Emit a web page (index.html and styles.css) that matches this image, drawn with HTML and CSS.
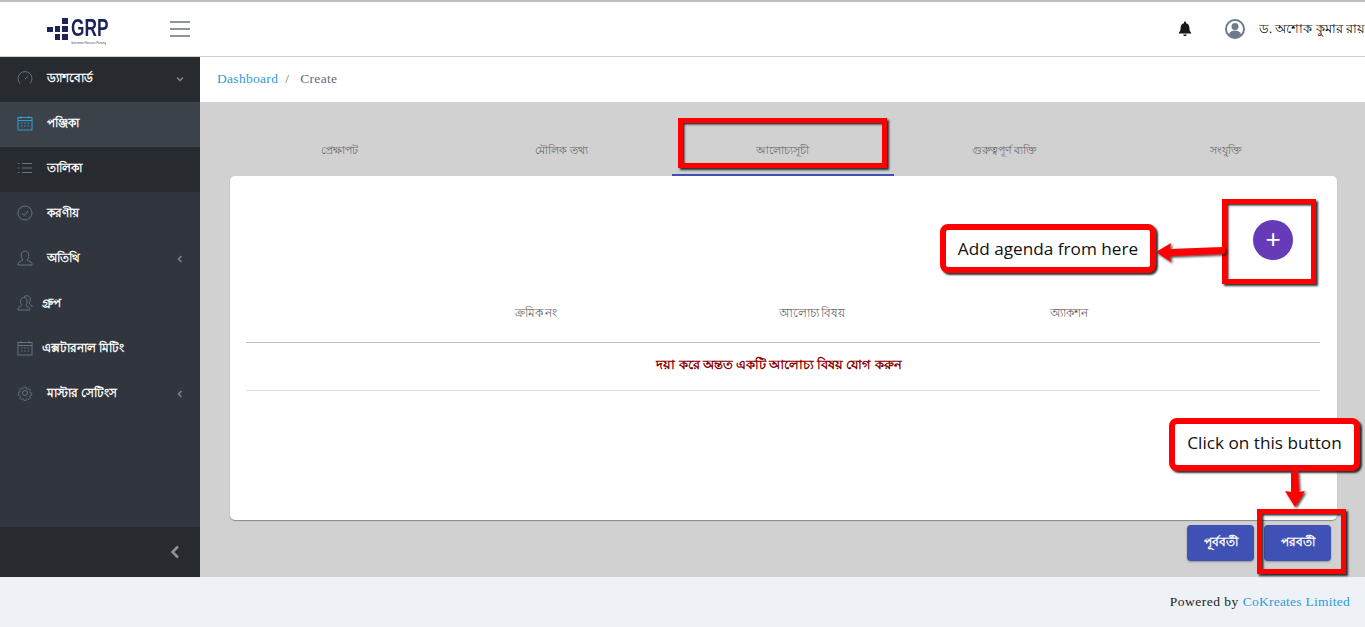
FILE: index.html
```html
<!DOCTYPE html>
<html lang="bn">
<head>
<meta charset="utf-8">
<title>GRP</title>
<link rel="stylesheet" href="styles.css">
</head>
<body>
<div class="page">
  <header class="topbar">
    <div class="brand">
      <svg class="logo-mark" width="24" height="24" viewBox="0 0 24 24"><g fill="#1d2359"><rect x="0" y="9" width="6" height="5"/><rect x="8" y="8" width="5" height="6"/><rect x="15" y="0" width="6" height="6"/><rect x="15" y="8" width="6" height="6"/><rect x="8" y="16" width="5" height="6"/><rect x="15" y="16" width="6" height="6"/></g></svg>
      <div class="logo-text"><span class="logo-word">GRP</span><span class="logo-sub">Government Resource Planning</span></div>
    </div>
    <button class="burger" aria-label="menu"><i></i><i></i><i></i></button>
    <div class="top-right">
      <svg class="bell" width="16" height="16" viewBox="0 0 16 16"><path fill="#15181c" d="M8 0.6c.6 0 1 .4 1 1v.6c2.200.5 3.400 2.300 3.400 4.500 0 3 .8 3.900 1.800 5.100v.8H1.800v-.8c1-1.200 1.800-2.100 1.800-5.100C3.600 4.500 4.800 2.700 7 2.200v-.6c0-.6.400-1 1-1zM6.200 13.600h3.600A1.800 1.800 0 0 1 8 15.300a1.800 1.800 0 0 1-1.800-1.700z"/></svg>
      <svg class="avatar" width="20" height="20" viewBox="0 0 20 20"><circle cx="10" cy="10" r="9" fill="#fff" stroke="#6e7a8a" stroke-width="2"/><circle cx="10" cy="7.500" r="3.500" fill="#6e7a8a"/><path d="M3.800 15.500c1-3 3.400-4 6.200-4s5.200 1 6.200 4A8 8 0 0 1 3.800 15.500z" fill="#6e7a8a"/></svg>
      <span class="user-name">ড. অশোক কুমার রায়</span>
    </div>
  </header>

  <div class="middle">
    <aside class="sidebar">
      <nav class="menu">
        <a class="item item-dark">
          <svg class="ico" viewBox="0 0 16 16"><path d="M3 13.500A7 7 0 1 1 13 13.500M8 9l3-2.500" /></svg>
          <span class="label">ড্যাশবোর্ড</span>
          <svg class="chev chev-down" viewBox="0 0 10 10"><path d="M2 3.500l3 3 3-3"/></svg>
        </a>
        <a class="item item-active">
          <svg class="ico ico-blue" viewBox="0 0 16 16"><rect x="1" y="2.500" width="14" height="12.500"/><path d="M4 1v2.500M12 1v2.500M1 5.500h14M4 8h1.500M7.300 8h1.500M10.600 8h1.500M4 11h1.500M7.300 11h1.500M10.600 11h1.500"/></svg>
          <span class="label">পঞ্জিকা</span>
        </a>
        <a class="item item-dark">
          <svg class="ico" viewBox="0 0 16 16"><path d="M1 3.500h1.500M5 3.500h10M1 8h1.500M5 8h10M1 12.500h1.500M5 12.500h10"/></svg>
          <span class="label">তালিকা</span>
        </a>
        <a class="item">
          <svg class="ico" viewBox="0 0 16 16"><circle cx="8" cy="8" r="7"/><path d="M5 8.300l2.200 2.200L11 6"/></svg>
          <span class="label">করণীয়</span>
        </a>
        <a class="item">
          <svg class="ico" viewBox="0 0 16 16"><path d="M1 15v-1.500c0-1.500 4-2.500 4.800-3.500C4.500 8.500 4.200 7 4.200 5 4.200 2.500 6 1 8 1s3.800 1.500 3.800 4c0 2-.3 3.500-1.600 5 .8 1 4.800 2 4.800 3.500V15z"/></svg>
          <span class="label">অতিথি</span>
          <svg class="chev" viewBox="0 0 10 10"><path d="M6.500 2l-3 3 3 3"/></svg>
        </a>
        <a class="item">
          <svg class="ico" viewBox="0 0 16 16"><path d="M1 15v-1.500c0-1.300 3-2 3.800-3C3.800 9.300 3.500 8 3.500 6.200 3.500 3.800 5 2.500 6.800 2.500s3.300 1.300 3.300 3.700c0 1.800-.3 3.100-1.300 4.300.8 1 3.800 1.700 3.800 3V15zM7 1.500C8 .8 9 .8 10 .8c2 0 3.300 1.400 3.300 3.500 0 1.700-.4 2.900-1.300 4 .7.800 3 1.500 3 2.700v1"/></svg>
          <span class="label label-tight">গ্রুপ</span>
        </a>
        <a class="item">
          <svg class="ico" viewBox="0 0 16 16"><rect x="1" y="2.500" width="14" height="12.500"/><path d="M4 1v2.500M12 1v2.500M1 5.500h14M4 8h1.500M7.300 8h1.500M10.600 8h1.500M4 11h1.500M7.300 11h1.500M10.600 11h1.500"/></svg>
          <span class="label label-tight">এক্সটারনাল মিটিং</span>
        </a>
        <a class="item">
          <svg class="ico" viewBox="0 0 16 16"><circle cx="8" cy="8" r="2.500"/><path d="M6.700 1h2.600l.4 2 1.200.6 1.800-1 1.800 1.900-1 1.800.5 1.200 2 .5v2.500l-2 .4-.5 1.200 1 1.800-1.800 1.800-1.800-1-1.200.5-.4 1.800H6.700l-.4-1.800-1.200-.5-1.800 1-1.800-1.800 1-1.800-.5-1.200-2-.4V7.300l2-.5.5-1.200-1-1.800 1.800-1.900 1.800 1 1.200-.6z" transform="translate(1.300 1.300) scale(.84)"/></svg>
          <span class="label">মাস্টার সেটিংস</span>
          <svg class="chev" viewBox="0 0 10 10"><path d="M6.500 2l-3 3 3 3"/></svg>
        </a>
      </nav>
      <div class="collapse-bar">
        <svg class="collapse" width="12" height="14" viewBox="0 0 12 14"><path d="M9 1.500L3.500 7 9 12.500"/></svg>
      </div>
    </aside>

    <main class="content">
      <div class="crumbs">
        <a class="crumb-link">Dashboard</a><span class="crumb-sep">/</span><span class="crumb-cur">Create</span>
      </div>
      <div class="work">
        <div class="tabs">
          <div class="tab">প্রেক্ষাপট</div>
          <div class="tab">মৌলিক তথ্য</div>
          <div class="tab tab-on">আলোচ্যসূচী</div>
          <div class="tab">গুরুত্বপূর্ণ ব্যক্তি</div>
          <div class="tab">সংযুক্তি</div>
        </div>
        <section class="card">
          <div class="add-row"><button class="add-btn" aria-label="add">+</button></div>
          <div class="thead"><span>ক্রমিক নং</span><span>আলোচ্য বিষয়</span><span>অ্যাকশন</span></div>
          <div class="empty">দয়া করে অন্তত একটি আলোচ্য বিষয় যোগ করুন</div>
        </section>
        <div class="actions">
          <button class="btn">পূর্ববর্তী</button>
          <button class="btn">পরবর্তী</button>
        </div>
      </div>
    </main>
  </div>

  <footer class="foot">
    <span>Powered by <a class="foot-link">CoKreates Limited</a></span>
  </footer>

  <div class="mark mark-tab"></div>
  <div class="mark mark-add"></div>
  <div class="mark mark-next"></div>
  <div class="note note-add">Add agenda from here</div>
  <div class="note note-click">Click on this button</div>
  <svg class="arrows" width="1365" height="627" viewBox="0 0 1365 627">
    <defs><filter id="sh" x="-20%" y="-20%" width="140%" height="140%"><feDropShadow dx="1.500" dy="1.500" stdDeviation="1" flood-color="#000" flood-opacity=".75"/></filter></defs>
    <path filter="url(#sh)" fill="#f00" d="M1156 252l15-9-1 6 53-2c3 0 3 7 0 7l-53 2 1 6z"/>
    <path filter="url(#sh)" fill="#f00" d="M1291 471h7l1 21 6-1-10 16-10-16 6 1z"/>
  </svg>
</div>
</body>
</html>
```

FILE: styles.css
```css
* { box-sizing: border-box; }
html, body { margin: 0; height: 100%; overflow: hidden; }
body { font-family: "Liberation Serif", "Noto Sans", serif; background: #fff; }
.page { position: relative; width: 1365px; height: 627px; display: flex; flex-direction: column; overflow: hidden; }

.topbar { height: 57px; flex: none; display: flex; align-items: center; border-top: 2px solid #bdbdbd; border-bottom: 1px solid #cfcfcf; background: #fff; }
.brand { width: 170px; padding-left: 47px; display: flex; align-items: flex-start; height: 24px; }
.logo-mark { flex: none; margin-top: 1px; }
.logo-text { display: flex; flex-direction: column; }
.logo-word { font: 700 24px/20px "Liberation Sans", sans-serif; height: 20px; color: #1d2359; transform: scaleX(.72); transform-origin: left; margin-top: 1px; }
.logo-sub { font: 3px/4px "Liberation Sans", sans-serif; color: #555; white-space: nowrap; transform: scaleX(.82); transform-origin: left; margin-top: 3px; }
.burger { width: 20px; height: 16px; padding: 0; border: 0; background: none; display: flex; flex-direction: column; justify-content: space-between; }
.burger i { display: block; height: 2px; background: #8f959b; }
.top-right { margin-left: auto; display: flex; align-items: center; white-space: nowrap; width: 188px; flex: none; }
.bell { margin-right: 32px; flex: none; }
.avatar { margin-right: 14px; flex: none; }
.user-name { font-size: 12.900px; color: #111; flex: none; }

.middle { flex: 1; display: flex; min-height: 0; }
.sidebar { width: 200px; flex: none; background: #31363e; display: flex; flex-direction: column; }
.menu { flex: 1; }
.item { height: 45px; display: flex; align-items: center; padding-left: 17px; color: #fff; position: relative; }
.item-dark { background: #272a2f; }
.item-active { background: #3c4249; }
.ico { width: 16px; height: 16px; flex: none; fill: none; stroke: #66727e; stroke-width: 1; margin-bottom: 4px; }
.ico-blue { stroke: #2a9fd8; }
.label { margin-left: 14px; margin-bottom: 2px; font-size: 12px; font-weight: 700; }
.label-tight { margin-left: 9px; }
.chev { position: absolute; left: 175px; top: 17px; width: 10px; height: 10px; fill: none; stroke: #7b848d; stroke-width: 1.600; }
.collapse-bar { height: 50px; background: #272a2f; display: flex; align-items: center; justify-content: flex-end; padding-right: 19px; }
.collapse { fill: none; stroke: #8a9096; stroke-width: 2.600; }

.content { flex: 1; display: flex; flex-direction: column; background: #d1d1d1; min-width: 0; }
.crumbs { height: 45px; flex: none; background: #fff; display: flex; align-items: center; padding: 0 0 2px 17px; font-size: 13.500px; letter-spacing: .3px; }
.crumb-link { color: #2e9bd6; }
.crumb-sep { margin: 0 11px 0 7px; color: #5f6e7d; }
.crumb-cur { color: #5f6e7d; }
.work { flex: 1; padding: 0 28px 0 29px; display: flex; flex-direction: column; }
.tabs { height: 74px; flex: none; display: grid; grid-template-columns: repeat(5, 1fr); }
.tab { display: flex; align-items: flex-end; justify-content: center; padding-bottom: 15px; font-size: 11px; color: #666; }
.tab-on { border-bottom: 2px solid #3f51b5; padding-bottom: 13px; }
.card { height: 344px; flex: none; margin-left: 1px; background: #fff; border-radius: 5px; padding: 0 17px 0 16px; box-shadow: 0 1px 1px rgba(0,0,0,.35); }
.add-row { height: 108px; display: flex; justify-content: flex-end; align-items: flex-start; padding: 44px 27px 0 0; }
.add-btn { width: 40px; height: 40px; border: 0; padding: 0 0 2px; border-radius: 50%; background: #673ab7; color: #fff; font: 400 26px/1 "Liberation Sans", sans-serif; }
.thead { height: 59px; display: grid; grid-template-columns: 276px 276px 238px; padding: 21px 0 0 152px; border-bottom: 1px solid #bdbdbd; font-size: 11.500px; color: #666; text-align: center; }
.empty { height: 48px; display: flex; align-items: center; justify-content: center; padding: 0 8px 2px 0; border-bottom: 1px solid #dcdcdc; font-size: 12.600px; color: #8b0000; font-weight: 700; }
.actions { display: flex; justify-content: flex-end; gap: 10px; margin-top: 5px; padding-right: 6px; }
.btn { width: 67px; height: 36px; border: 0; border-radius: 4px; background: #3f51b5; color: #fff; font: 700 12px "Liberation Serif", "Noto Sans", serif; padding-bottom: 2px; box-shadow: 0 1px 2px rgba(0,0,0,.3); }

.foot { height: 50px; flex: none; background: #eef2f6; display: flex; align-items: center; justify-content: flex-end; padding-right: 15px; font-size: 13.500px; letter-spacing: .5px; color: #222; }
.foot-link { color: #2e9bd6; letter-spacing: .25px; }

.mark { position: absolute; border: 5px solid #f00; box-shadow: 1.500px 1.500px 2px rgba(0,0,0,.8), inset 1.500px 1.500px 2px rgba(0,0,0,.8); }
.mark-tab { left: 678px; top: 118px; width: 209px; height: 50px; }
.mark-add { left: 1222px; top: 199px; width: 94px; height: 85px; }
.mark-next { left: 1257px; top: 509px; width: 89px; height: 65px; }
.note { position: absolute; background: #fff; border: 6px solid #f00; border-radius: 8px; font: 17.200px/1 "Open Sans", "Noto Sans", sans-serif; color: #111; display: flex; align-items: center; justify-content: center; box-shadow: 2px 2px 2px rgba(0,0,0,.8); }
.note-add { left: 940px; top: 224px; width: 216px; height: 49px; }
.note-click { left: 1169px; top: 418px; width: 191px; height: 53px; padding-bottom: 3px; }
.arrows { position: absolute; left: 0; top: 0; pointer-events: none; }
```
